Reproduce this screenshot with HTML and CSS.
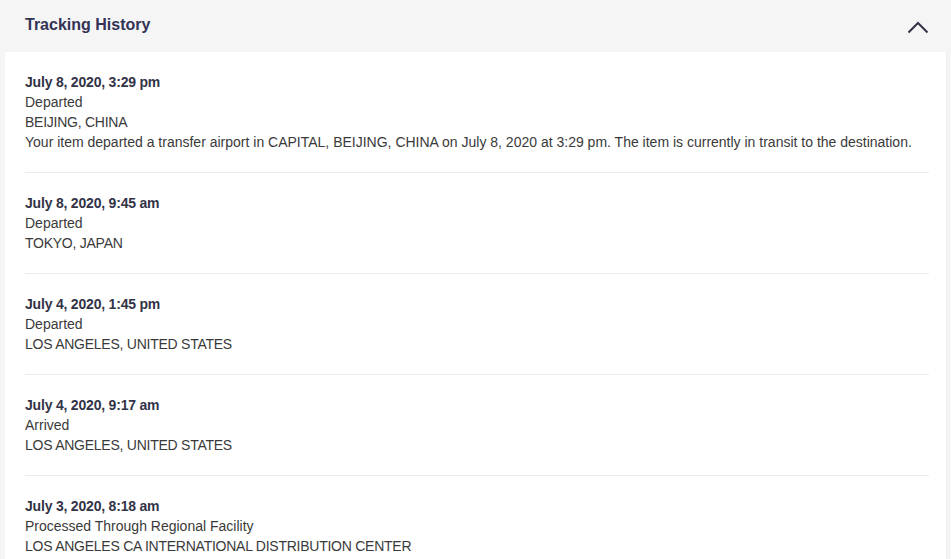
FILE: index.html
```html
<!DOCTYPE html>
<html>
<head>
<meta charset="utf-8">
<link rel="stylesheet" href="styles.css">
</head>
<body>
<div class="panel">
  <div class="header">
    <h2 class="title">Tracking History</h2>
    <svg class="chevron" width="22" height="14" viewBox="0 0 22 14"><path d="M1.5 12.5 L11 3 L20.5 12.5" fill="none" stroke="#333347" stroke-width="2"/></svg>
  </div>
  <div class="body">
    <div class="entry">
      <div class="date">July 8, 2020, 3:29 pm</div>
      <div class="line">Departed</div>
      <div class="line loc">BEIJING, CHINA</div>
      <div class="line">Your item departed a transfer airport in CAPITAL, BEIJING, CHINA on July 8, 2020 at 3:29 pm. The item is currently in transit to the destination.</div>
    </div>
    <div class="entry">
      <div class="date">July 8, 2020, 9:45 am</div>
      <div class="line">Departed</div>
      <div class="line loc">TOKYO, JAPAN</div>
    </div>
    <div class="entry">
      <div class="date">July 4, 2020, 1:45 pm</div>
      <div class="line">Departed</div>
      <div class="line loc">LOS ANGELES, UNITED STATES</div>
    </div>
    <div class="entry">
      <div class="date">July 4, 2020, 9:17 am</div>
      <div class="line">Arrived</div>
      <div class="line loc">LOS ANGELES, UNITED STATES</div>
    </div>
    <div class="entry">
      <div class="date">July 3, 2020, 8:18 am</div>
      <div class="line">Processed Through Regional Facility</div>
      <div class="line loc">LOS ANGELES CA INTERNATIONAL DISTRIBUTION CENTER</div>
    </div>
  </div>
</div>
</body>
</html>
```
FILE: styles.css
```css
html, body {
  margin: 0;
  padding: 0;
  background: #f5f5f5;
  font-family: "Liberation Sans", Arial, sans-serif;
  overflow: hidden;
}
.panel {
  width: 951px;
  height: 559px;
}
.header {
  height: 51px;
  display: flex;
  align-items: center;
  justify-content: space-between;
  padding: 0 22px 0 25px;
  box-sizing: border-box;
}
.title {
  margin: 0;
  font-size: 16px;
  font-weight: bold;
  color: #333355;
  padding-bottom: 1px;
}
.chevron {
  display: block;
  margin-top: 2px;
}
.body {
  background: #fff;
  margin: 1px 4px 0 5px;
  border-right: 1px solid #efefef;
  padding: 0 17px 0 20px;
  height: 507px;
  overflow: hidden;
}
.entry {
  padding: 20px 0;
  border-bottom: 1px solid #ececec;
  font-size: 14px;
  line-height: 20px;
  color: #3a3a3a;
}
.date {
  font-weight: bold;
  color: #333347;
  letter-spacing: -0.2px;
}
.loc {
  letter-spacing: -0.25px;
}
```
